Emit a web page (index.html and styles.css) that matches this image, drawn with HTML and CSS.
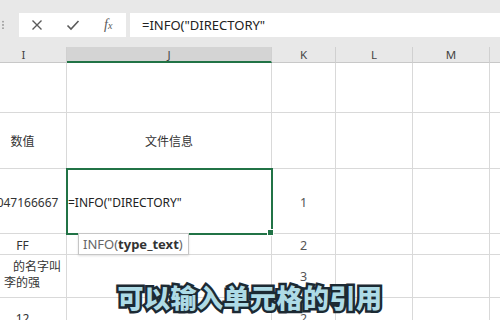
FILE: index.html
```html
<!DOCTYPE html>
<html lang="zh">
<head>
  <meta charset="UTF-8" />
  <title>INFO 函数</title>
  <link rel="stylesheet" href="styles.css">
</head>
<body>
  <div class="formula-bar">
    <span class="grip"></span>
    <div class="fx-buttons">
      <span class="btn">
        <svg width="12" height="12" viewBox="0 0 12 12"><path d="M1.5 1.5 L10.5 10.5 M10.5 1.5 L1.5 10.5" stroke="#5a5a5a" stroke-width="1.4" fill="none"/></svg>
      </span>
      <span class="btn">
        <svg width="14" height="12" viewBox="0 0 14 12"><path d="M1.5 6.5 L5 10 L12.5 2" stroke="#5a5a5a" stroke-width="1.6" fill="none"/></svg>
      </span>
      <span class="btn fx">f<sub>x</sub></span>
    </div>
    <div class="formula-input">=INFO("DIRECTORY"</div>
  </div>

  <div class="sheet">
    <div class="hdr">I</div>
    <div class="hdr current">J</div>
    <div class="hdr">K</div>
    <div class="hdr">L</div>
    <div class="hdr">M</div>
    <div class="hdr"></div>

    <div class="cell r1"></div><div class="cell r1"></div><div class="cell r1"></div><div class="cell r1"></div><div class="cell r1"></div><div class="cell r1"></div>

    <div class="cell r2 center">数值</div>
    <div class="cell r2 center">文件信息</div>
    <div class="cell r2"></div><div class="cell r2"></div><div class="cell r2"></div><div class="cell r2"></div>

    <div class="cell r3 center">0.047166667</div>
    <div class="cell r3 active">
      <span class="edit-text">=INFO("DIRECTORY"</span>
      <span class="handle"></span>
      <div class="tip">INFO(<b>type_text</b>)</div>
    </div>
    <div class="cell r3 center num">1</div>
    <div class="cell r3"></div><div class="cell r3"></div><div class="cell r3"></div>

    <div class="cell r4 center">FF</div>
    <div class="cell r4"></div>
    <div class="cell r4 center num">2</div>
    <div class="cell r4"></div><div class="cell r4"></div><div class="cell r4"></div>

    <div class="cell r5 wrap">
      <span class="line1">的名字叫</span>
      <span class="line2">李的强</span>
    </div>
    <div class="cell r5"></div>
    <div class="cell r5 center num">3</div>
    <div class="cell r5"></div><div class="cell r5"></div><div class="cell r5"></div>

    <div class="cell r6 center">12</div>
    <div class="cell r6"></div>
    <div class="cell r6 center num">2</div>
    <div class="cell r6"></div><div class="cell r6"></div><div class="cell r6"></div>
  </div>

  <div class="caption">可以输入单元格的引用</div>
</body>
</html>
```

FILE: styles.css
```css
body {
  margin: 0;
  width: 500px;
  height: 320px;
  overflow: hidden;
  background: #fff;
  font-family: "Noto Sans", "Noto Sans CJK SC", sans-serif;
  color: #333;
  position: relative;
}

/* formula bar */
.formula-bar {
  height: 47px;
  background: #e8e8e8;
  display: flex;
  align-items: flex-start;
  padding-top: 13px;
  box-sizing: border-box;
}
.grip {
  width: 2px;
  height: 10px;
  margin: 7px 15px 0 2px;
  background: radial-gradient(circle, #a8a8a8 0.8px, transparent 1px) 0 0 / 2px 3.3px;
}
.fx-buttons {
  width: 107px;
  height: 24px;
  background: #fff;
  display: flex;
  align-items: center;
}
.btn {
  width: 36px;
  display: flex;
  justify-content: center;
  align-items: center;
}
.fx {
  font-family: "Liberation Serif", serif;
  font-style: italic;
  font-size: 14px;
  color: #5a5a5a;
}
.fx sub {
  font-size: 10px;
  vertical-align: -1px;
}
.formula-input {
  flex: 1;
  height: 24px;
  margin-left: 4px;
  background: #fff;
  font-size: 13px;
  line-height: 24px;
  padding-left: 12px;
  color: #222;
}

/* grid */
.sheet {
  display: grid;
  grid-template-columns: 88px 205px 64px 77px 77px 60px;
  grid-template-rows: 16px 50px 56px 65px 21px 43px 30px;
  margin-left: -21px;
  position: relative;
}
.hdr {
  background: #e8e8e8;
  border-right: 1px solid #d0d0d0;
  border-bottom: 1px solid #c8c8c8;
  font-size: 11.5px;
  color: #444;
  text-align: center;
  line-height: 15px;
  box-sizing: border-box;
}
.hdr:first-child {
  text-indent: 2px;
}
.hdr.current {
  background: #d4d4d4;
  border-bottom: 2px solid #217346;
}
.cell {
  border-right: 1px solid #d9d9d9;
  border-bottom: 1px solid #d9d9d9;
  box-sizing: border-box;
  font-size: 12px;
  color: #333;
  display: flex;
  align-items: center;
  white-space: nowrap;
}
.center {
  justify-content: center;
}
.num {
  color: #555;
  font-size: 12.5px;
}
.r3.center, .r4.center {
  padding-top: 2px;
}
.r6.center {
  align-items: flex-start;
  padding-top: 12px;
}

/* active cell */
.active {
  position: relative;
  z-index: 2;
  outline: 2px solid #217346;
  outline-offset: -1px;
  font-size: 12px;
  color: #222;
}
.edit-text {
  padding-left: 1px;
  padding-top: 3px;
}
.handle {
  position: absolute;
  right: -3px;
  bottom: -3px;
  width: 5px;
  height: 5px;
  background: #217346;
  border: 1px solid #fff;
}
.tip {
  position: absolute;
  top: 100%;
  left: 11px;
  height: 20px;
  padding: 0 5px 0 4px;
  background: #fff;
  border: 1px solid #c6c6c6;
  box-shadow: 0 1px 2px rgba(0,0,0,0.12);
  font-size: 13px;
  line-height: 20px;
  color: #666;
}
.tip b {
  color: #333;
}

/* wrapped text cell */
.wrap {
  flex-direction: column;
  align-items: flex-start;
  justify-content: center;
  line-height: 16px;
  padding-bottom: 2px;
}
.line1 {
  margin-left: 34px;
}
.line2 {
  margin-left: 25px;
}

/* video subtitle */
.caption {
  position: absolute;
  left: 0;
  right: 0;
  top: 280px;
  text-align: center;
  font-family: "Noto Sans CJK SC", sans-serif;
  font-weight: 900;
  font-size: 26px;
  letter-spacing: 0.5px;
  line-height: 34px;
  color: #aedbe6;
  -webkit-text-stroke: 5px #1c2a33;
  paint-order: stroke fill;
}
```
